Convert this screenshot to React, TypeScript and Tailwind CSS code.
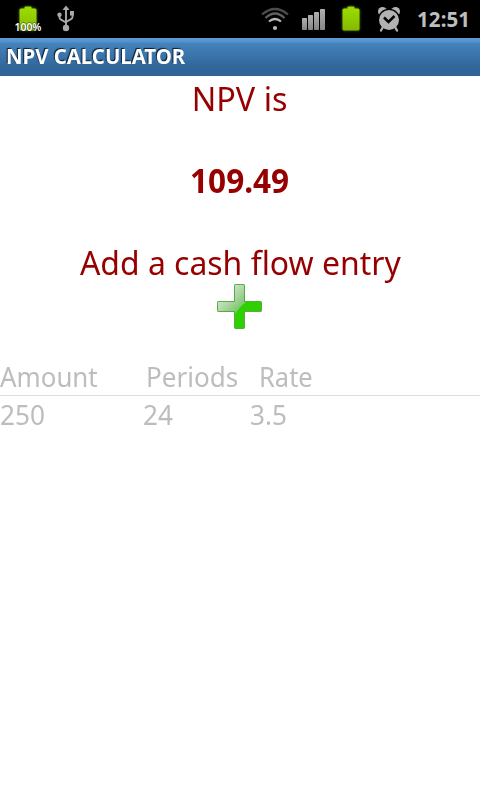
import React from "react";

function BatteryIcon({ x }: { x: number }) {
  return (
    <g filter="url(#glow)">
      <rect x={x + 5} y="6.5" width="7" height="4" rx="1" fill="#99d800" />
      <rect x={x} y="8.5" width="17" height="22" rx="1.5" fill="url(#cell)" />
    </g>
  );
}

function StatusIcons() {
  return (
    <svg className="block shrink-0" width="410" height="38" viewBox="0 0 410 38" fill="none">
      <defs>
        <linearGradient id="cell" x1="0" y1="0" x2="0" y2="1">
          <stop offset="0" stopColor="#9bdc00" />
          <stop offset="1" stopColor="#84b900" />
        </linearGradient>
        <linearGradient id="bar" x1="0" y1="0" x2="0" y2="1">
          <stop offset="0" stopColor="#b0b0b0" />
          <stop offset="1" stopColor="#858585" />
        </linearGradient>
        <filter id="glow" x="-40%" y="-40%" width="180%" height="180%">
          <feGaussianBlur stdDeviation="1.6" result="b" />
          <feComponentTransfer in="b" result="dim">
            <feFuncA type="linear" slope="0.55" />
          </feComponentTransfer>
          <feMerge>
            <feMergeNode in="dim" />
            <feMergeNode in="SourceGraphic" />
          </feMerge>
        </filter>
      </defs>
      <BatteryIcon x={19.5} />
      <text x="14.500" y="31" fontFamily="'Noto Sans', sans-serif" fontWeight="600" fontSize="11" textLength="27" lengthAdjust="spacingAndGlyphs" fill="#fff" stroke="#000" strokeOpacity=".5" strokeWidth="1.4" paintOrder="stroke">100%</text>
      <g stroke="#a9a9a9" strokeWidth="1.900">
        <path d="M66 8v19M59.500 15v2.500q0 1.500 1.500 2.200l5 2.800M72.500 13v4q0 1.500-1.500 2.200L66 22" />
        <path d="M66 5.500l3.500 4.500h-7z" fill="#a9a9a9" stroke="none" />
        <circle cx="59.500" cy="14.800" r="2.200" fill="#a9a9a9" stroke="none" />
        <rect x="70" y="11" width="4" height="4.500" fill="#a9a9a9" stroke="none" />
        <circle cx="66" cy="28" r="3.200" fill="#a9a9a9" stroke="none" />
      </g>
      <g strokeWidth="2.200">
        <path d="M262 14.500Q275 3.500 288 14.500" stroke="#4c4c4c" />
        <path d="M265.500 18Q275 9 284.500 18" stroke="#606060" />
        <path d="M269 21.500Q275 16.500 281 21.500" stroke="#b8b8b8" />
        <circle cx="275" cy="28" r="2.100" fill="#b8b8b8" />
      </g>
      <rect x="302" y="18" width="5" height="12" rx=".7" fill="url(#bar)" />
      <rect x="308" y="15" width="5" height="15" rx=".7" fill="url(#bar)" />
      <rect x="314" y="12" width="5" height="18" rx=".7" fill="url(#bar)" />
      <rect x="320" y="9" width="5" height="21" rx=".7" fill="url(#bar)" />
      <BatteryIcon x={342.5} />
      <g>
        <circle cx="382.500" cy="11.500" r="4.500" fill="#b2b2b2" />
        <circle cx="395.500" cy="11.500" r="4.500" fill="#b2b2b2" />
        <circle cx="389" cy="20" r="11.300" fill="#000" />
        <path d="M383.500 26l-2.500 4.500M394.500 26l2.500 4.500" stroke="#b2b2b2" strokeWidth="2.300" strokeLinecap="round" />
        <circle cx="389" cy="20" r="10" fill="#b2b2b2" />
        <path d="M384 17.500l4.500 4.500 6-6" stroke="#000" strokeWidth="2.500" />
      </g>
    </svg>
  );
}

function PlusIcon() {
  return (
    <svg className="block" width="46" height="46" viewBox="0 0 46 46">
      <defs>
        <linearGradient id="shine" gradientUnits="userSpaceOnUse" x1="8" y1="8" x2="24" y2="24">
          <stop offset="0" stopColor="#d2e6ce" />
          <stop offset=".5" stopColor="#a9d6a0" />
          <stop offset="1" stopColor="#79c66a" />
        </linearGradient>
        <clipPath id="cross">
          <path d="M17.500.500h10v17h17v10h-17v17h-10v-17h-17v-10h17z" />
        </clipPath>
      </defs>
      <g clipPath="url(#cross)">
        <path d="M0 0h46v46H0z" fill="#2fd000" />
        <path d="M0 0h46L28 19Q22 23 17 32L0 46z" fill="url(#shine)" />
      </g>
      <path d="M17.500 1.500q0-1 1-1h8q1 0 1 1v16h16q1 0 1 1v8q0 1-1 1h-16v16q0 1-1 1h-8q-1 0-1-1v-16h-16q-1 0-1-1v-8q0-1 1-1h16z" fill="none" stroke="#368d20" strokeOpacity=".65" />
    </svg>
  );
}

export default function App() {
  return (
    <div className="flex h-[800px] w-[480px] flex-col overflow-hidden bg-white font-['Noto_Sans',sans-serif]">
      <div className="flex h-[38px] shrink-0 items-center bg-black">
        <StatusIcons />
        <span className="ml-[7px] text-[20.500px] leading-[38px] font-bold tracking-[0.1px] whitespace-nowrap text-[#bebebe]">12:51</span>
      </div>
      <div className="flex h-[38px] shrink-0 items-start bg-[linear-gradient(to_bottom,#5c9ad6_0px,#5795d2_3px,#4481ba_6px,#2e6496_32px,#336597_38px)] pl-[6px]">
        <span className="origin-left scale-x-[0.969] text-[21px] leading-[36px] font-bold whitespace-nowrap text-white [text-shadow:-1px_-1px_1px_#0b1c2e]">NPV CALCULATOR</span>
      </div>
      <div className="flex flex-col items-center pt-[2px] text-[33.500px] leading-[41px] whitespace-nowrap text-[#960000]">
        <div className="scale-x-[0.965]">NPV is</div>
        <div className="mt-[41px] scale-x-[0.942] font-bold">109.49</div>
        <div className="mt-[41px] scale-x-[0.953]">Add a cash flow entry</div>
      </div>
      <button className="mx-auto flex h-[75px] w-[46px] shrink-0 items-start pt-px" aria-label="Add">
        <PlusIcon />
      </button>
      <div className="flex h-[38px] shrink-0 border-b border-[#dedede] text-[28px] leading-[36px] whitespace-nowrap text-[#bdbdbd]">
        <span className="w-[146px] origin-left scale-x-[0.924]">Amount</span>
        <span className="w-[113px] origin-left scale-x-[0.93]">Periods</span>
        <span className="origin-left scale-x-[0.91]">Rate</span>
      </div>
      <div className="flex h-[38px] shrink-0 text-[28px] leading-[36px] whitespace-nowrap text-[#bdbdbd]">
        <span className="w-[143px] origin-left scale-x-[0.935]">250</span>
        <span className="w-[107px] origin-left scale-x-[0.935]">24</span>
        <span className="origin-left scale-x-[0.935]">3.5</span>
      </div>
    </div>
  );
}
